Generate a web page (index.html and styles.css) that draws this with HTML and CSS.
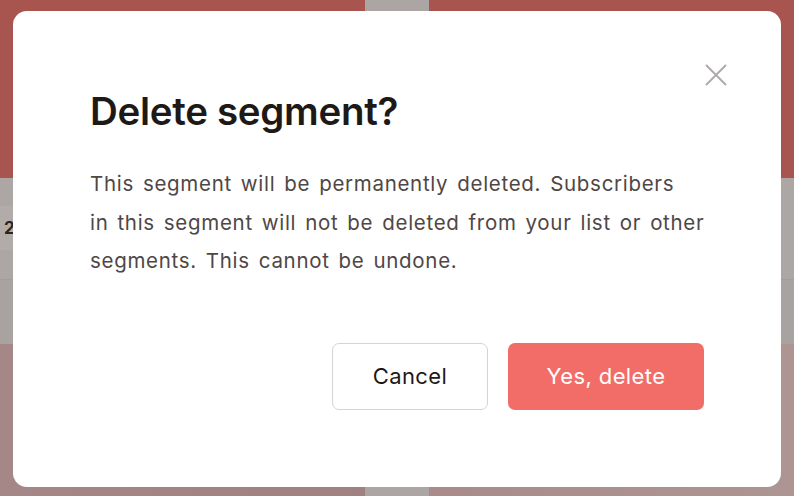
FILE: index.html
```html
<!DOCTYPE html>
<html lang="en">
<head>
<meta charset="utf-8">
<title>Delete segment</title>
<link rel="stylesheet" href="styles.css">
</head>
<body>
<div class="page">
  <div class="band band-top band-left"></div>
  <div class="col-mid"></div>
  <div class="band band-top band-right"></div>
  <div class="band band-row1 band-left"><span class="badge">2</span></div>
  <div class="band band-row1 band-right"></div>
  <div class="band band-row2 band-left"></div>
  <div class="band band-row2 band-right"></div>
  <div class="band band-bottom band-left"></div>
  <div class="band band-bottom band-right"></div>
</div>

<div class="modal" role="dialog" aria-labelledby="modal-title">
  <button class="close" aria-label="Close">
    <svg width="22" height="22" viewBox="0 0 22 22"><path d="M1 1 L21 21 M21 1 L1 21" stroke="#b0abab" stroke-width="2" fill="none"/></svg>
  </button>
  <h2 id="modal-title" class="title">Delete segment?</h2>
  <p class="text">This segment will be permanently deleted. Subscribers<br>in this segment will not be deleted from your list or other<br>segments. This cannot be undone.</p>
  <div class="actions">
    <button class="btn btn-secondary">Cancel</button>
    <button class="btn btn-danger">Yes, delete</button>
  </div>
</div>
</body>
</html>
```
FILE: styles.css
```css
* { box-sizing: border-box; }
html, body { margin: 0; padding: 0; }
body {
  width: 794px;
  height: 496px;
  overflow: hidden;
  position: relative;
  font-family: Inter, "Noto Sans", sans-serif;
  background: #a9a4a1;
}
.page {
  display: grid;
  grid-template-columns: 365px 64px 1fr;
  grid-template-rows: 178px 102px 64px 1fr;
  width: 794px;
  height: 496px;
}
.col-mid {
  grid-column: 2;
  grid-row: 1 / 5;
  background: #aba6a3;
}
.band-left { grid-column: 1; }
.band-right { grid-column: 3; }
.band-top { grid-row: 1; background: #a9554f; }
.band-row1 { grid-row: 2; background: #aca7a4; border-bottom: 1px solid #a39e9b; display: flex; align-items: center; }
.band-row2 { grid-row: 3; background: #a8a3a0; }
.band-bottom.band-left { grid-row: 4; background: linear-gradient(90deg, #a58788, #a08081); }
.band-bottom.band-right { grid-row: 4; background: linear-gradient(90deg, #a88b8a, #ad9593); }
.badge {
  margin-left: -20px;
  margin-top: -2px;
  background: #b1acaa;
  border-radius: 12px;
  padding: 12px 14px 12px 24px;
  font-weight: 700;
  font-size: 17px;
  color: #2a2523;
}

.modal {
  position: absolute;
  left: 13px;
  top: 11px;
  width: 768px;
  height: 476px;
  background: #fff;
  border-radius: 14px;
  padding: 76px 77px 0 77px;
}
.close {
  position: absolute;
  top: 53px;
  right: 54px;
  width: 22px;
  height: 22px;
  padding: 0;
  border: 0;
  background: none;
  display: flex;
}
.title {
  margin: 0;
  font-size: 38.5px;
  line-height: 48px;
  font-weight: 600;
  letter-spacing: -0.3px;
  color: #1e1917;
}
.text {
  margin: 30px -14px 0 0;
  font-size: 20.5px;
  line-height: 38.5px;
  letter-spacing: 0.7px;
  word-spacing: 2.5px;
  color: #4f4745;
}
.actions {
  display: flex;
  justify-content: flex-end;
  gap: 20px;
  margin-top: 62px;
}
.btn {
  height: 67px;
  border-radius: 7px;
  font-family: Inter, "Noto Sans", sans-serif;
  font-size: 22px;
  letter-spacing: 0.4px;
  cursor: pointer;
}
.btn-secondary {
  width: 156px;
  background: #fff;
  border: 1px solid #d6d3d3;
  color: #1e1917;
}
.btn-danger {
  width: 196px;
  background: #f26d67;
  border: 0;
  color: #fff;
}
```
